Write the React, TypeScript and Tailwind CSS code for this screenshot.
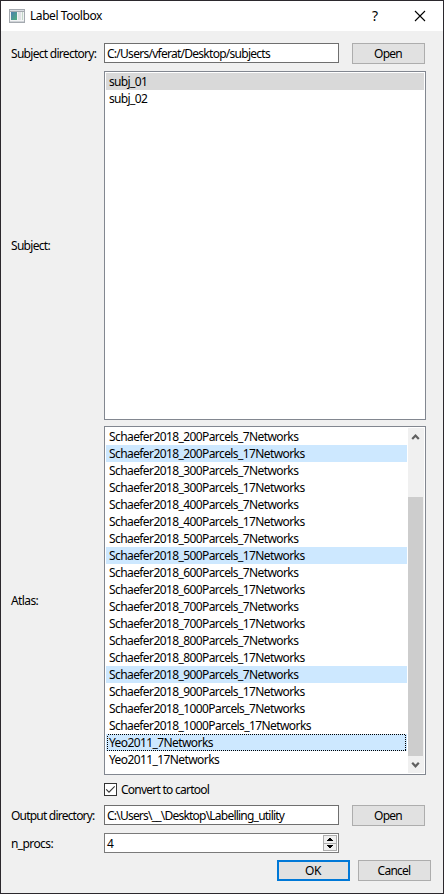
import type { ReactNode } from "react";

const sizes = [200, 300, 400, 500, 600, 700, 800, 900, 1000];
const atlases = [
  ...sizes.flatMap((n) => [`Schaefer2018_${n}Parcels_7Networks`, `Schaefer2018_${n}Parcels_17Networks`]),
  "Yeo2011_7Networks",
  "Yeo2011_17Networks",
];
const selected = new Set([
  "Schaefer2018_200Parcels_17Networks",
  "Schaefer2018_500Parcels_17Networks",
  "Schaefer2018_900Parcels_7Networks",
  "Yeo2011_7Networks",
]);
const focused = "Yeo2011_7Networks";

function TitleBar() {
  return (
    <header className="flex h-[30px] shrink-0 items-center bg-white pl-2">
      <svg width="16" height="14" viewBox="0 0 16 14" shapeRendering="crispEdges">
        <defs>
          <linearGradient id="screen" x1="0" y1="0" x2="1" y2="1">
            <stop offset="0" stopColor="#4a7fae" />
            <stop offset="1" stopColor="#4fae7d" />
          </linearGradient>
        </defs>
        <path fill="#a4a9af" d="M0 0h16v14H0z" />
        <path fill="#d9dde2" d="M1 1h14v1H1z" />
        <path fill="#f3f4f5" d="M1 3h14v9H1z" />
        <path fill="url(#screen)" d="M2 3h6v8H2z" />
        <path fill="#dfe2e4" d="M9 3h3v8H9z" />
        <path fill="#c2d6c8" d="M13 3h1v8h-1z" />
        <path fill="#cfd3d7" d="M1 12h14v1H1z" />
      </svg>
      <h1 className="ml-[5px] h-[18px] grow text-[12px] leading-[18px] tracking-[-0.43px] whitespace-nowrap">Label Toolbox</h1>
      <span className="w-[10px] text-center text-[14px] leading-[18px]">?</span>
      <svg className="mr-[17px] ml-[34px]" width="12" height="12" viewBox="0 0 12 12">
        <path d="M1 1l10 10M11 1L1 11" stroke="#000" strokeWidth="1.1" fill="none" />
      </svg>
    </header>
  );
}

function Label({ children, className }: { children: ReactNode; className: string }) {
  return <div className={`w-[93px] shrink-0 leading-[22px] whitespace-nowrap ${className}`}>{children}</div>;
}

function Field({ value, className }: { value: string; className: string }) {
  return (
    <div className={`h-[20px] w-[235px] border border-[#6f6f6f] bg-white pl-[2px] leading-[20px] whitespace-pre ${className}`}>
      {value}
    </div>
  );
}

function Button({ children, primary }: { children: ReactNode; primary?: boolean }) {
  return (
    <button
      className={`flex h-[21px] w-[73px] items-center justify-center bg-[#e1e1e1] pr-px leading-[17px] ${
        primary ? "border-2 border-[#0078d7] tracking-[-0.5px]" : "border border-[#adadad] tracking-[-0.75px]"
      }`}
    >
      {children}
    </button>
  );
}

function Scrollbar() {
  return (
    <div className="flex h-[345px] w-[16px] shrink-0 flex-col bg-[#f0f0f0]">
      <svg width="16" height="17" viewBox="0 0 16 17">
        <path d="M4.2 11l3.3-3.5 3.3 3.5" stroke="#606060" strokeWidth="2.2" fill="none" />
      </svg>
      <div className="mt-[52px] h-[259px] w-[15px] bg-[#cdcdcd]" />
      <svg width="16" height="17" viewBox="0 0 16 17">
        <path d="M4.2 6.8l3.3 3.5 3.3-3.5" stroke="#606060" strokeWidth="2.2" fill="none" />
      </svg>
    </div>
  );
}

export default function App() {
  return (
    <div className="flex h-[894px] w-[444px] flex-col border border-[#2b282d] bg-[#f0f0f0] font-['Noto_Sans',sans-serif] text-[12px] text-black">
      <TitleBar />
      <main className="flex flex-col pt-3 pl-[10px]">
        <div className="flex h-[21px]">
          <Label className="tracking-[-0.71px]">Subject directory:</Label>
          <Field value="C:/Users/vferat/Desktop/subjects" className="mr-[13px] tracking-[-0.73px]" />
          <Button>Open</Button>
        </div>
        <div className="mt-[7px] flex items-center">
          <Label className="tracking-[-0.7px]">Subject:</Label>
          <ul className="h-[349px] w-[322px] border border-[#828790] bg-white p-px leading-[17px] tracking-[-0.65px]">
            <li className="h-[17px] bg-[#d9d9d9] pl-[3px]">subj_01</li>
            <li className="h-[17px] pl-[3px]">subj_02</li>
          </ul>
        </div>
        <div className="mt-[6px] flex items-center">
          <Label className="tracking-[-0.6px]">Atlas:</Label>
          <div className="flex h-[349px] w-[322px] border border-[#828790] bg-white p-px">
            <ul className="mr-px w-[301px] leading-[17px] tracking-[-0.59px]">
              {atlases.map((name) => (
                <li
                  key={name}
                  className={`relative h-[17px] pl-[3px] whitespace-nowrap ${selected.has(name) ? "bg-[#cde8ff]" : ""}`}
                >
                  {name}
                  {name === focused && (
                    <svg className="absolute top-0 left-px" width="299" height="17" shapeRendering="crispEdges">
                      <rect x="0.5" y="0.5" width="298" height="16" fill="none" stroke="#000" strokeDasharray="1 1" />
                    </svg>
                  )}
                </li>
              ))}
            </ul>
            <Scrollbar />
          </div>
        </div>
        <div className="mt-2 ml-[93px] flex h-[13px] items-center">
          <svg width="13" height="13" viewBox="0 0 13 13">
            <rect x="0.5" y="0.5" width="12" height="12" fill="#fff" stroke="#333" />
            <path d="M2.2 6.3L5 9.1l5.7-5.7" fill="none" stroke="#333" strokeWidth="1.1" />
          </svg>
          <span className="ml-[4px] leading-[18px] tracking-[-0.75px]">Convert to cartool</span>
        </div>
        <div className="mt-[9px] flex h-[21px]">
          <Label className="tracking-[-0.79px]">Output directory:</Label>
          <Field value={"C:\\Users\\__\\Desktop\\Labelling_utility"} className="mr-[13px] tracking-[-0.78px]" />
          <Button>Open</Button>
        </div>
        <div className="mt-[7px] flex h-[20px]">
          <Label className="tracking-[-0.6px]">n_procs:</Label>
          <div className="flex h-[20px] w-[235px] justify-between border border-[#7a7a7a] bg-white p-px leading-[18px]">
            <span className="pl-[1px]">4</span>
            <svg width="14" height="16" viewBox="0 0 14 16" shapeRendering="crispEdges">
              <path fill="#adadad" d="M0 0h14v16H0z" />
              <path fill="#f0f0f0" d="M1 1h12v7H1zM1 9h12v6H1z" />
              <path fill="#000" d="M6 3h2v1H6zM5 4h4v1H5zM4 5h6v1H4zM4 10h6v1H4zM5 11h4v1H5zM6 12h2v1H6z" />
            </svg>
          </div>
        </div>
        <div className="mt-[7px] ml-[266px] flex gap-2">
          <Button primary>OK</Button>
          <Button>Cancel</Button>
        </div>
      </main>
    </div>
  );
}
